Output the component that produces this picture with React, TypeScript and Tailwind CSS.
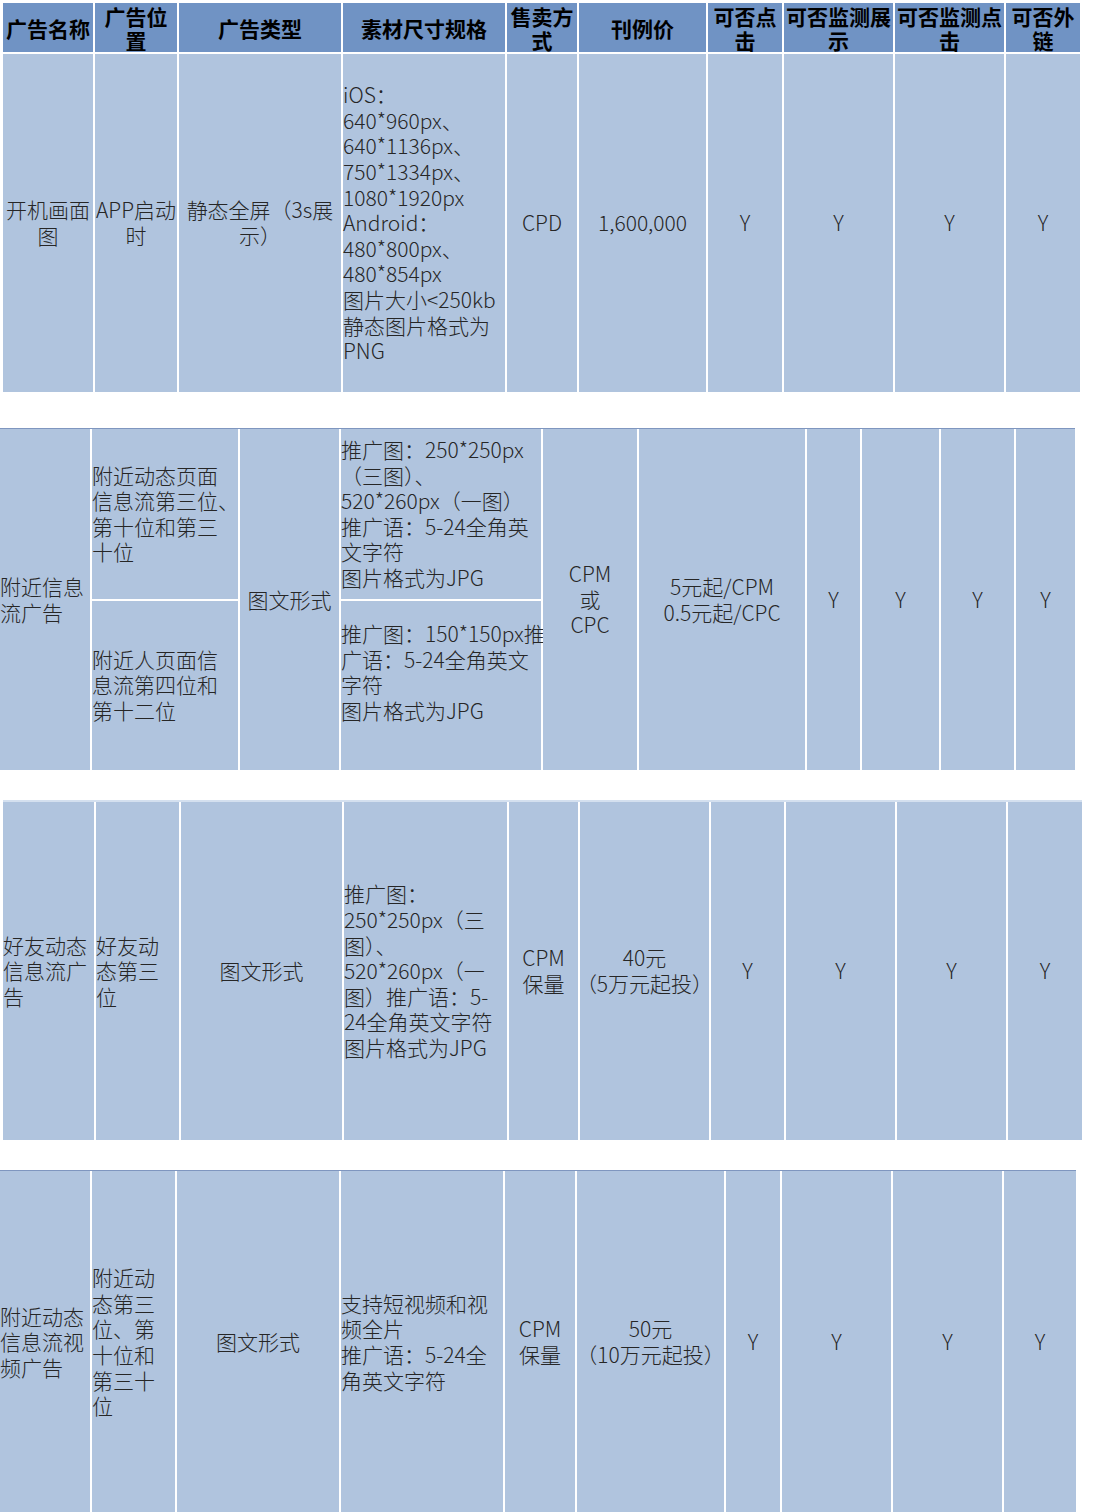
import React from 'react';

type Cell = {
  w: number;
  lines?: string[];
  left?: boolean;
  split?: [string[], string[]];
};

const FONT = { fontFamily: '"Noto Sans CJK SC", "Noto Sans", sans-serif' };

const headerCells: { w: number; lines: string[] }[] = [
  { w: 90, lines: ['广告名称'] },
  { w: 82, lines: ['广告位', '置'] },
  { w: 162, lines: ['广告类型'] },
  { w: 162, lines: ['素材尺寸规格'] },
  { w: 70, lines: ['售卖方', '式'] },
  { w: 127, lines: ['刊例价'] },
  { w: 74, lines: ['可否点', '击'] },
  { w: 109, lines: ['可否监测展', '示'] },
  { w: 109, lines: ['可否监测点', '击'] },
  { w: 74, lines: ['可否外', '链'] },
];

const row1: Cell[] = [
  { w: 90, lines: ['开机画面', '图'] },
  { w: 82, lines: ['APP启动', '时'] },
  { w: 162, lines: ['静态全屏（3s展', '示）'] },
  {
    w: 162,
    left: true,
    lines: [
      'iOS：',
      '640*960px、',
      '640*1136px、',
      '750*1334px、',
      '1080*1920px',
      'Android：',
      '480*800px、',
      '480*854px',
      '图片大小<250kb',
      '静态图片格式为',
      'PNG',
    ],
  },
  { w: 70, lines: ['CPD'] },
  { w: 127, lines: ['1,600,000'] },
  { w: 74, lines: ['Y'] },
  { w: 109, lines: ['Y'] },
  { w: 109, lines: ['Y'] },
  { w: 74, lines: ['Y'] },
];

const row2: Cell[] = [
  { w: 90, left: true, lines: ['附近信息', '流广告'] },
  {
    w: 146,
    left: true,
    split: [
      ['附近动态页面', '信息流第三位、', '第十位和第三', '十位'],
      ['附近人页面信', '息流第四位和', '第十二位'],
    ],
  },
  { w: 99, lines: ['图文形式'] },
  {
    w: 200,
    left: true,
    split: [
      ['推广图：250*250px', '（三图）、', '520*260px（一图）', '推广语：5-24全角英', '文字符', '图片格式为JPG'],
      ['推广图：150*150px推', '广语：5-24全角英文', '字符', '图片格式为JPG', '\u00a0'],
    ],
  },
  { w: 94, lines: ['CPM', '或', 'CPC'] },
  { w: 166, lines: ['5元起/CPM', '0.5元起/CPC'] },
  { w: 53, lines: ['Y'] },
  { w: 77, lines: ['Y'] },
  { w: 73, lines: ['Y'] },
  { w: 59, lines: ['Y'] },
];

const row3: Cell[] = [
  { w: 91, left: true, lines: ['好友动态', '信息流广', '告'] },
  { w: 83, left: true, lines: ['好友动', '态第三', '位'] },
  { w: 161, lines: ['图文形式'] },
  {
    w: 163,
    left: true,
    lines: ['推广图：', '250*250px（三', '图）、', '520*260px（一', '图）推广语：5-', '24全角英文字符', '图片格式为JPG'],
  },
  { w: 69, lines: ['CPM', '保量'] },
  { w: 129, lines: ['40元', '（5万元起投）'] },
  { w: 73, lines: ['Y'] },
  { w: 109, lines: ['Y'] },
  { w: 109, lines: ['Y'] },
  { w: 74, lines: ['Y'] },
];

const row4: Cell[] = [
  { w: 90, left: true, lines: ['附近动态', '信息流视', '频广告'] },
  { w: 83, left: true, lines: ['附近动', '态第三', '位、第', '十位和', '第三十', '位'] },
  { w: 162, lines: ['图文形式'] },
  { w: 162, left: true, lines: ['支持短视频和视', '频全片', '推广语：5-24全', '角英文字符'] },
  { w: 70, lines: ['CPM', '保量'] },
  { w: 147, lines: ['50元', '（10万元起投）'] },
  { w: 54, lines: ['Y'] },
  { w: 109, lines: ['Y'] },
  { w: 109, lines: ['Y'] },
  { w: 72, lines: ['Y'] },
];

function Lines({ lines, left }: { lines: string[]; left?: boolean }) {
  return (
    <div className={`whitespace-nowrap ${left ? 'text-left' : 'text-center'}`}>
      {lines.map((l, i) => (
        <div key={i}>{l}</div>
      ))}
    </div>
  );
}

function BodyCell({ cell }: { cell: Cell }) {
  if (cell.split) {
    return (
      <div className="flex flex-col gap-[2px] shrink-0" style={{ width: cell.w }}>
        {cell.split.map((part, i) => (
          <div key={i} className="flex-1 bg-[#b0c4de] flex items-center justify-start">
            <Lines lines={part} left />
          </div>
        ))}
      </div>
    );
  }
  return (
    <div
      className={`bg-[#b0c4de] flex items-center shrink-0 ${cell.left ? 'justify-start' : 'justify-center'}`}
      style={{ width: cell.w }}
    >
      <Lines lines={cell.lines ?? []} left={cell.left} />
    </div>
  );
}

function BodyRow({ cells, className }: { cells: Cell[]; className: string }) {
  return (
    <div className={`flex gap-[2px] text-[21px] leading-[25.6px] font-light text-[#262626] ${className}`}>
      {cells.map((c, i) => (
        <BodyCell key={i} cell={c} />
      ))}
    </div>
  );
}

export default function App() {
  return (
    <div className="w-[1096px] h-[1512px] bg-white overflow-hidden" style={FONT}>
      {/* 表头 + 开机画面 */}
      <div className="pt-[3px] pl-[3px]">
        <div className="flex gap-[2px] h-[49px] text-[21px] leading-[24px] font-bold text-black">
          {headerCells.map((h, i) => (
            <div
              key={i}
              className="bg-[#7093c4] flex items-center justify-center shrink-0"
              style={{ width: h.w }}
            >
              <Lines lines={h.lines} />
            </div>
          ))}
        </div>
        <BodyRow cells={row1} className="mt-[2px] h-[338px]" />
      </div>

      {/* 附近信息流广告 */}
      <div className="mt-[36px] w-[1075px] border-t border-[#7f96bf]">
        <BodyRow cells={row2} className="h-[341px]" />
      </div>

      {/* 好友动态信息流广告 */}
      <div className="mt-[30px] ml-[3px] w-[1079px] border-t-2 border-[#d4e0ef]">
        <BodyRow cells={row3} className="h-[338px]" />
      </div>

      {/* 附近动态信息流视频广告 */}
      <div className="mt-[30px] w-[1076px] border-t border-[#7f96bf]">
        <BodyRow cells={row4} className="h-[342px]" />
      </div>
    </div>
  );
}
